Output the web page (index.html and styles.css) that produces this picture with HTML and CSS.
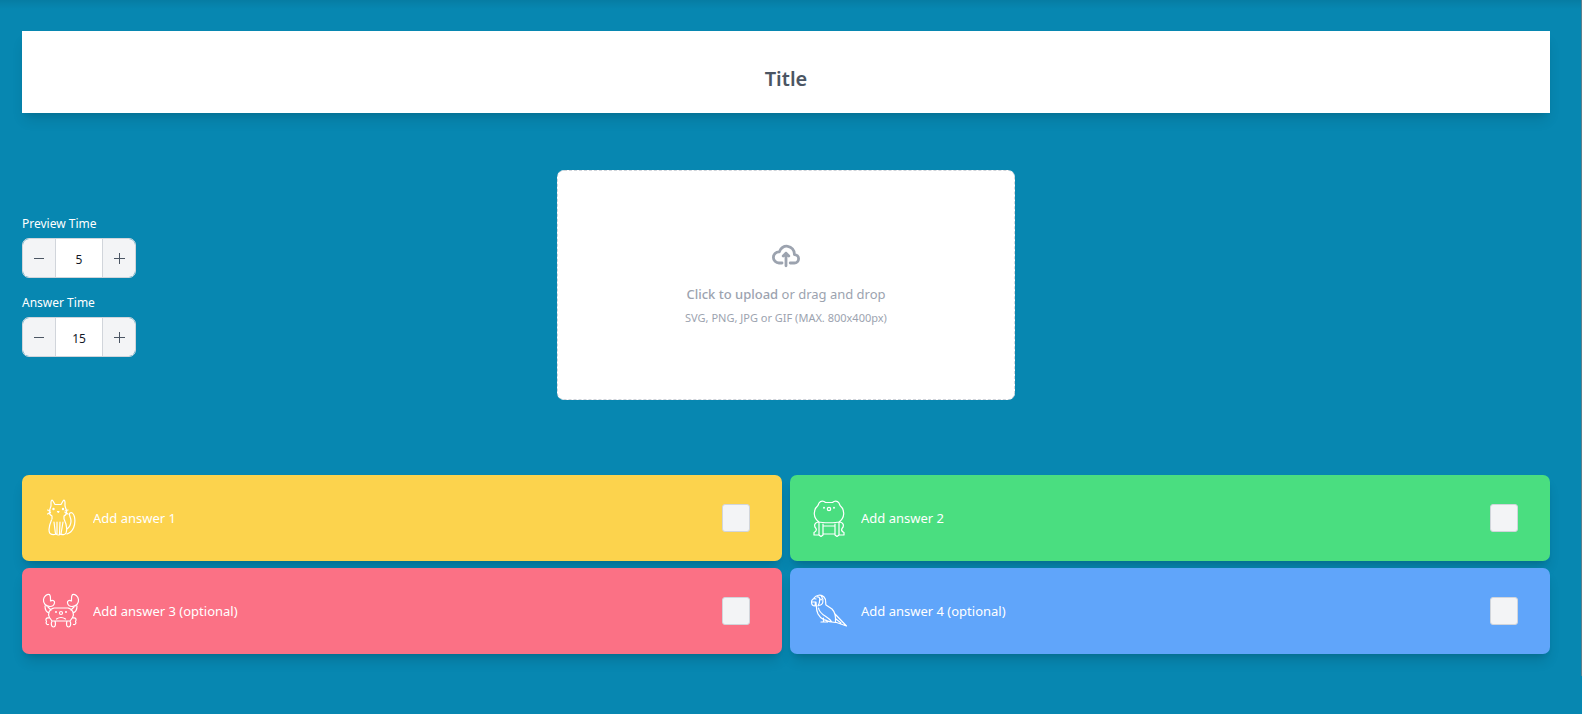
FILE: index.html
```html
<!DOCTYPE html>
<html lang="en">
<head>
<meta charset="utf-8">
<meta name="viewport" content="width=device-width, initial-scale=1">
<title>Question editor</title>
<link rel="stylesheet" href="styles.css">
</head>
<body>
<main class="editor">
  <input class="title" type="text" placeholder="Title" aria-label="Title">
  <section class="media">
    <div class="timers">
      <div class="timer">
        <label for="preview">Preview Time</label>
        <div class="stepper">
          <button type="button" aria-label="Decrease preview time"><svg viewBox="0 0 12 12"><path d="M1 6.5h10"/></svg></button>
          <input id="preview" type="text" value="5">
          <button type="button" aria-label="Increase preview time"><svg viewBox="0 0 12 12"><path d="M1 6.5h11M6.5 1v11"/></svg></button>
        </div>
      </div>
      <div class="timer">
        <label for="answer">Answer Time</label>
        <div class="stepper">
          <button type="button" aria-label="Decrease answer time"><svg viewBox="0 0 12 12"><path d="M1 6.5h10"/></svg></button>
          <input id="answer" type="text" value="15">
          <button type="button" aria-label="Increase answer time"><svg viewBox="0 0 12 12"><path d="M1 6.5h11M6.5 1v11"/></svg></button>
        </div>
      </div>
    </div>
    <button class="upload" type="button">
      <svg viewBox="0 0 20 16"><path d="M13 13h3a3 3 0 0 0 0-6h-.025A5.56 5.56 0 0 0 16 6.5 5.5 5.5 0 0 0 5.207 5.021C5.137 5.017 5.071 5 5 5a4 4 0 0 0 0 8h2.167M10 15V6m0 0L8 8m2-2 2 2"/></svg>
      <span class="upload-main"><strong>Click to upload</strong> or drag and drop</span>
      <span class="upload-hint">SVG, PNG, JPG or GIF (MAX. 800x400px)</span>
    </button>
  </section>
  <section class="answers">
    <div class="answer yellow">
      <svg viewBox="0 0 60 60"><path d="M22 28c-2-1-3-3-2.500-5.500L21 18v-4q.5-3 2-1l2 3.500h6l2-3.500q1.500-2 2 1v4l1.500 4.500c.5 2.500-.5 4.500-2.500 5.500v3c2 4 3.500 10 2 14-1 2-4 2-5 1q-2.500 2-5 0-3 1.500-6-.5c-2-3 0-10 1.500-13.500M22 28v3M17.500 22l3 1M17.500 26l3-1.500M38 22l-3 1M38 26l-3-1.500M24 34l1.500 12M27 34v12M30 34l-.5 12M33 34l-2 12M37 46c6-2 9-9 7.500-17-1-4-3-5-4.500-4-2 1.500 1 4 1 8 0 4-1.500 6-4 8M27.500 23.500h1.500l-.7.8z"/><circle class="dot" cx="23.500" cy="21" r=".6"/><circle class="dot" cx="33" cy="21" r=".6"/></svg>
      <input class="answer-text" type="text" placeholder="Add answer 1" aria-label="Answer 1">
      <input class="check" type="checkbox" aria-label="Answer 1 is correct">
    </div>
    <div class="answer green">
      <svg viewBox="0 0 60 60"><path d="M21 34c-6-4-6-12-1.500-16 1-1 1-2 1.500-3 2-3 5-2 6.500-.5h7c1.500-1.500 4.500-2.500 6.500.5.500 1 .5 2 1.500 3 4.500 4 4.500 12-1.500 16M21 34c3 1 17 1 20 0M21 34c-4.500 0-5.500 4-3 6.500 1 2 0 3-2 4V47h5M41 34c4.500 0 5.500 4 3 6.500-1 2 0 3 2 4V47h-5M21 35v12l2 1.500 2-1.500V36M41 35v12l-2 1.500-2-1.500V36M25 38h12M25 46h12"/><circle cx="31" cy="21" r="1.700"/><circle class="dot" cx="26" cy="19.700" r=".4"/><circle class="dot" cx="36" cy="19.700" r=".4"/></svg>
      <input class="answer-text" type="text" placeholder="Add answer 2" aria-label="Answer 2">
      <input class="check" type="checkbox" aria-label="Answer 2 is correct">
    </div>
    <div class="answer red">
      <svg viewBox="0 0 60 60"><path d="M24 27h14c5 1 6.500 6 4.500 9.500L40 40H22l-2.500-3.500C17.500 33 19 28 24 27zM20 25.500c-4 0-7-3-6.500-7C14 15 17 13 19.500 13.500c1.500 1.500 1 4.500 1 6.500 2.500-1.500 4.500 0 4 2-.5 2.500-2.500 3.500-4.500 3.500zM42 25.500c4 0 7-3 6.500-7-.5-3.500-3.500-5.500-6-5-1.500 1.500-1 4.500-1 6.500-2.500-1.500-4.500 0-4 2 .5 2.500 2.500 3.500 4.500 3.500zM15 25c0 4 1 6 4 7M18 26l3 3M47 25c0 4-1 6-4 7M44 26l-3 3M19.500 37c-4-1-4 2-3 3.500-1 1.500 0 3.500 2 3M42.500 37c4-1 4 2 3 3.500 1 1.500 0 3.500-2 3M22 40c-1.500 3-.5 6 1.500 6s2.500-3 1.500-6M40 40c1.500 3 .5 6-1.500 6s-2.500-3-1.500-6M26.500 38q4.500-3 9 0"/><circle cx="31" cy="32" r="1.500"/><circle class="dot" cx="26" cy="31" r=".4"/><circle class="dot" cx="36" cy="31" r=".4"/></svg>
      <input class="answer-text" type="text" placeholder="Add answer 3 (optional)" aria-label="Answer 3">
      <input class="check" type="checkbox" aria-label="Answer 3 is correct">
    </div>
    <div class="answer blue">
      <svg viewBox="0 0 60 60"><path d="M18 18c-3-1-4.500 1-4.500 3 0 3 1.500 4 3.500 4l.5-4h-3M16 17c2-3 7-4 10-1s1 6 2 8l6 4c3 3 4 7 3.500 13.500-8-.5-15-3.500-17.500-8.500-2-4-1.500-7-2-12M19 16c4-1 3 5 1 9M23 14.500c3 4 3 10-3 10M20.500 27c1 7 9 8 13 13.500M37 33l11.500 12-10-3.500M38 38l5 4M25.500 37v3.500M23 41h6.500M28 39l1.500 2"/><circle class="dot" cx="23" cy="18.500" r=".4"/></svg>
      <input class="answer-text" type="text" placeholder="Add answer 4 (optional)" aria-label="Answer 4">
      <input class="check" type="checkbox" aria-label="Answer 4 is correct">
    </div>
  </section>
</main>
</body>
</html>
```
FILE: styles.css
```css
* { box-sizing: border-box; }
body {
  margin: 0;
  min-height: 100vh;
  background: #0787b1;
  font-family: "Noto Sans", "Open Sans", sans-serif;
  font-size: 13px;
}
input, button { margin: 0; font: inherit; }
.editor {
  padding: 31px 31px 22px 22px;
  border-right: 1px solid #5d7f8c;
  background: linear-gradient(rgb(0 0 0 / 8%), transparent 9px);
}
.title {
  display: block;
  width: 100%;
  height: 82px;
  padding: 12px 0 0;
  border: 0;
  background: #fff;
  text-align: center;
  font-size: 20px;
  font-weight: 600;
  color: #4b5563;
  box-shadow: 0 9px 13px -3px rgb(0 0 0 / 12%), 0 4px 6px -4px rgb(0 0 0 / 12%);
}
.title::placeholder { color: #4b5563; opacity: 1; }
.media {
  display: grid;
  grid-template-columns: 1fr 30% 1fr;
  align-items: center;
  margin: 57px 0 75px;
}
.timers { display: grid; gap: 16px; padding-top: 2px; }
.timer label {
  display: block;
  margin-bottom: 5px;
  font-size: 12px;
  line-height: 18px;
  font-weight: 400;
  color: #fff;
}
.stepper {
  display: flex;
  width: 114px;
  height: 40px;
  border: 1px solid #d1d5db;
  border-radius: 7px;
  overflow: hidden;
}
.stepper button {
  display: grid;
  place-items: center;
  width: 32px;
  padding: 0;
  border: 0;
  background: #f3f4f6;
}
.stepper svg { width: 12px; height: 12px; stroke: #4b5563; stroke-width: 1; fill: none; }
.stepper input {
  flex: 1;
  min-width: 0;
  padding: 2px 0 0;
  border: solid #d1d5db;
  border-width: 0 1px;
  background: #fff;
  text-align: center;
  font-size: 12px;
  color: #111827;
}
.upload {
  display: flex;
  flex-direction: column;
  align-items: center;
  justify-content: center;
  height: 230px;
  padding: 0 0 4px;
  border: 1px dashed #d1d5db;
  border-radius: 7px;
  background: #fff;
  color: #9ca3af;
}
.upload svg {
  width: 28px;
  height: 28px;
  margin-bottom: 14px;
  fill: none;
  stroke: currentColor;
  stroke-width: 2;
  stroke-linecap: round;
  stroke-linejoin: round;
}
.upload-main { margin-bottom: 7px; font-size: 13px; line-height: 20px; }
.upload-main strong { font-weight: 500; }
.upload-hint { font-size: 11px; line-height: 14px; }
.answers { display: grid; grid-template-columns: 1fr 1fr; gap: 7px 8px; }
.answer {
  display: flex;
  align-items: center;
  height: 86px;
  padding: 0 32px 0 8px;
  border-radius: 7px;
  box-shadow: 0 9px 13px -3px rgb(0 0 0 / 14%), 0 4px 6px -4px rgb(0 0 0 / 14%);
}
.yellow { background: #fcd34d; }
.green { background: #4ade80; }
.red { background: #fb7185; }
.blue { background: #60a5fa; }
.answer svg {
  flex: none;
  width: 60px;
  height: 60px;
  fill: none;
  stroke: #fff;
  stroke-width: 1.2;
  stroke-linecap: round;
  stroke-linejoin: round;
}
.dot { fill: #fff; }
.answer-text {
  flex: 1;
  min-width: 0;
  padding: 0 3px;
  border: 0;
  background: none;
  color: #fff;
}
.answer-text::placeholder { color: #fff; opacity: 1; }
.check {
  appearance: none;
  width: 28px;
  height: 28px;
  border: 1px solid #d1d5db;
  border-radius: 3px;
  background: #f3f4f6;
}
```
